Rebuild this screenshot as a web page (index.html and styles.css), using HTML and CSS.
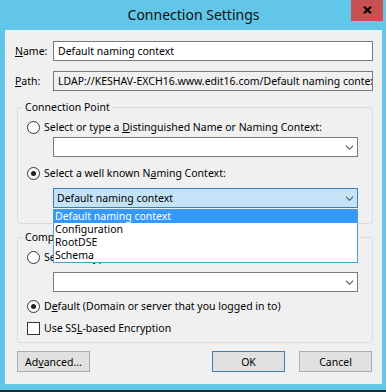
FILE: index.html
```html
<!DOCTYPE html>
<html lang="en">
<head>
<meta charset="utf-8">
<title>Connection Settings</title>
<link rel="stylesheet" href="styles.css">
</head>
<body>
<div class="window">
  <div class="titlebar">
    <span class="title">Connection Settings</span>
    <span class="close" aria-label="Close">
      <svg width="9" height="8" viewBox="0 0 9 8"><path d="M1 0.8 L8 7.2 M8 0.8 L1 7.2" stroke="#000" stroke-width="2.1" fill="none"/></svg>
    </span>
  </div>
  <div class="client">
    <div class="field-row row-name">
      <label class="field-label"><u>N</u>ame:</label>
      <div class="textbox">Default naming context</div>
    </div>
    <div class="field-row">
      <label class="field-label"><u>P</u>ath:</label>
      <div class="textbox readonly">LDAP://KESHAV-EXCH16.www.edit16.com/Default naming context</div>
    </div>

    <fieldset class="group group-cp">
      <legend>Connection Point</legend>
      <div class="option"><span class="radio"></span><span>Select or type a <u>D</u>istinguished Name or Naming Context:</span></div>
      <div class="combo combo-gap-s"><span></span><svg class="chev" width="7" height="5" viewBox="0 0 7 5"><path d="M0 0 L3.5 3.5 L7 0 L7 1.5 L3.5 5 L0 1.5 Z" fill="#555"/></svg></div>
      <div class="option option-gap"><span class="radio checked"></span><span>Select a well known N<u>a</u>ming Context:</span></div>
      <div class="combo-wrap">
        <div class="combo open"><span>Default naming context</span><svg class="chev" width="7" height="5" viewBox="0 0 7 5"><path d="M0 0 L3.5 3.5 L7 0 L7 1.5 L3.5 5 L0 1.5 Z" fill="#555"/></svg></div>
        <ul class="dropdown">
          <li class="selected">Default naming context</li>
          <li>Configuration</li>
          <li>RootDSE</li>
          <li>Schema</li>
        </ul>
      </div>
    </fieldset>

    <fieldset class="group group-comp">
      <legend>Computer</legend>
      <div class="option"><span class="radio"></span><span>Select or type a domain or server:</span></div>
      <div class="combo combo-gap-l"><span></span><svg class="chev" width="7" height="5" viewBox="0 0 7 5"><path d="M0 0 L3.5 3.5 L7 0 L7 1.5 L3.5 5 L0 1.5 Z" fill="#555"/></svg></div>
      <div class="option option-gap-s"><span class="radio checked"></span><span>D<u>e</u>fault (Domain or server that you logged in to)</span></div>
      <div class="option option-gap-s"><span class="checkbox"></span><span>Use SS<u>L</u>-based Encryption</span></div>
    </fieldset>

    <div class="buttons">
      <button class="btn">Ad<u>v</u>anced...</button>
      <button class="btn default">OK</button>
      <button class="btn cancel">Cancel</button>
    </div>
  </div>
</div>
<div class="taskbar"></div>
</body>
</html>
```
FILE: styles.css
```css
* { box-sizing: border-box; }
html, body { margin: 0; padding: 0; }
body {
  width: 386px;
  height: 392px;
  overflow: hidden;
  background: #62c6e9;
  font-family: "Noto Sans", "Open Sans", sans-serif;
  font-size: 10.5px;
  color: #000;
}
.window {
  width: 386px;
  height: 390px;
  background: #62c6e9;
  display: flex;
  flex-direction: column;
}
.titlebar {
  height: 30px;
  flex: none;
  position: relative;
  display: flex;
  align-items: center;
  justify-content: center;
}
.title {
  font-size: 14px;
  color: #111;
  margin-top: -1px;
  margin-left: 1px;
}
.close {
  position: absolute;
  top: 0;
  right: 3px;
  width: 32px;
  height: 21px;
  background: #c75050;
  display: flex;
  align-items: center;
  justify-content: center;
}
.close svg { margin-left: 1px; margin-top: -1px; }
.client {
  margin-left: 5px;
  width: 377px;
  height: 354px;
  background: #f0f0f0;
  display: flex;
  flex-direction: column;
}
.taskbar { height: 2px; background: #1f2a34; }

.field-row {
  display: flex;
  align-items: center;
  height: 20px;
  margin-top: 10px;
}
.row-name { margin-top: 11px; }
.field-label {
  width: 48px;
  padding-left: 10px;
}
.textbox {
  width: 320px;
  height: 20px;
  border: 1px solid #7a7a7a;
  background: #fff;
  padding: 0 4px;
  line-height: 18px;
  white-space: nowrap;
  overflow: hidden;
}
.textbox.readonly { background: #f0f0f0; }

.group {
  margin: 9px 0 0 12px;
  width: 356px;
  min-inline-size: 0;
  border: 1px solid #dcdcdc;
  border-radius: 3px;
  padding: 4px 0 15px 0;
}
.group-comp {
  margin-top: 6px;
  padding-bottom: 6px;
}
.group legend {
  margin-left: 5px;
  padding: 0 2px;
  line-height: 15px;
}
.option {
  display: flex;
  align-items: center;
  height: 16px;
  margin-left: 9px;
  white-space: nowrap;
}
.option-gap { margin-top: 8px; }
.option-gap-s { margin-top: 6px; }
.radio, .checkbox {
  flex: none;
  width: 13px;
  height: 13px;
  border: 1px solid #333;
  background: #fff;
  margin-right: 4px;
  position: relative;
}
.radio { border-radius: 50%; }
.radio.checked::after {
  content: "";
  position: absolute;
  inset: 3px;
  border-radius: 50%;
  background: #222;
}
.combo {
  margin-left: 35px;
  width: 305px;
  height: 20px;
  border: 1px solid #7a7a7a;
  background: #fff;
  display: flex;
  align-items: center;
  justify-content: space-between;
  padding: 0 4px 0 3px;
  line-height: 18px;
}
.combo-gap-s { margin-top: 2px; }
.combo-gap-l { margin-top: 7px; }
.chev { flex: none; }
.combo-wrap {
  position: relative;
  margin: 7px 0 0 35px;
  width: 305px;
}
.combo.open {
  margin-left: 0;
  background: #c5e3f6;
  border-color: #3c7fb1;
}
.dropdown {
  position: absolute;
  left: 0;
  top: 21px;
  width: 305px;
  margin: 0;
  padding: 0;
  list-style: none;
  background: #fff;
  border: 1px solid #4aa0d6;
  z-index: 5;
}
.dropdown li {
  height: 13px;
  line-height: 13px;
  padding-left: 1px;
  white-space: nowrap;
}
.dropdown li.selected {
  background: #3399ff;
  color: #fff;
}

.buttons {
  display: flex;
  margin: 8px 0 0 12px;
  width: 355px;
}
.btn {
  width: 73px;
  height: 21px;
  border: 1px solid #adadad;
  background: #e1e1e1;
  font: inherit;
  color: #000;
  padding: 0;
  border-radius: 0;
}
.btn.default {
  margin-left: auto;
  border-color: #3c7fb1;
}
.btn.cancel { margin-left: 14px; }
```
